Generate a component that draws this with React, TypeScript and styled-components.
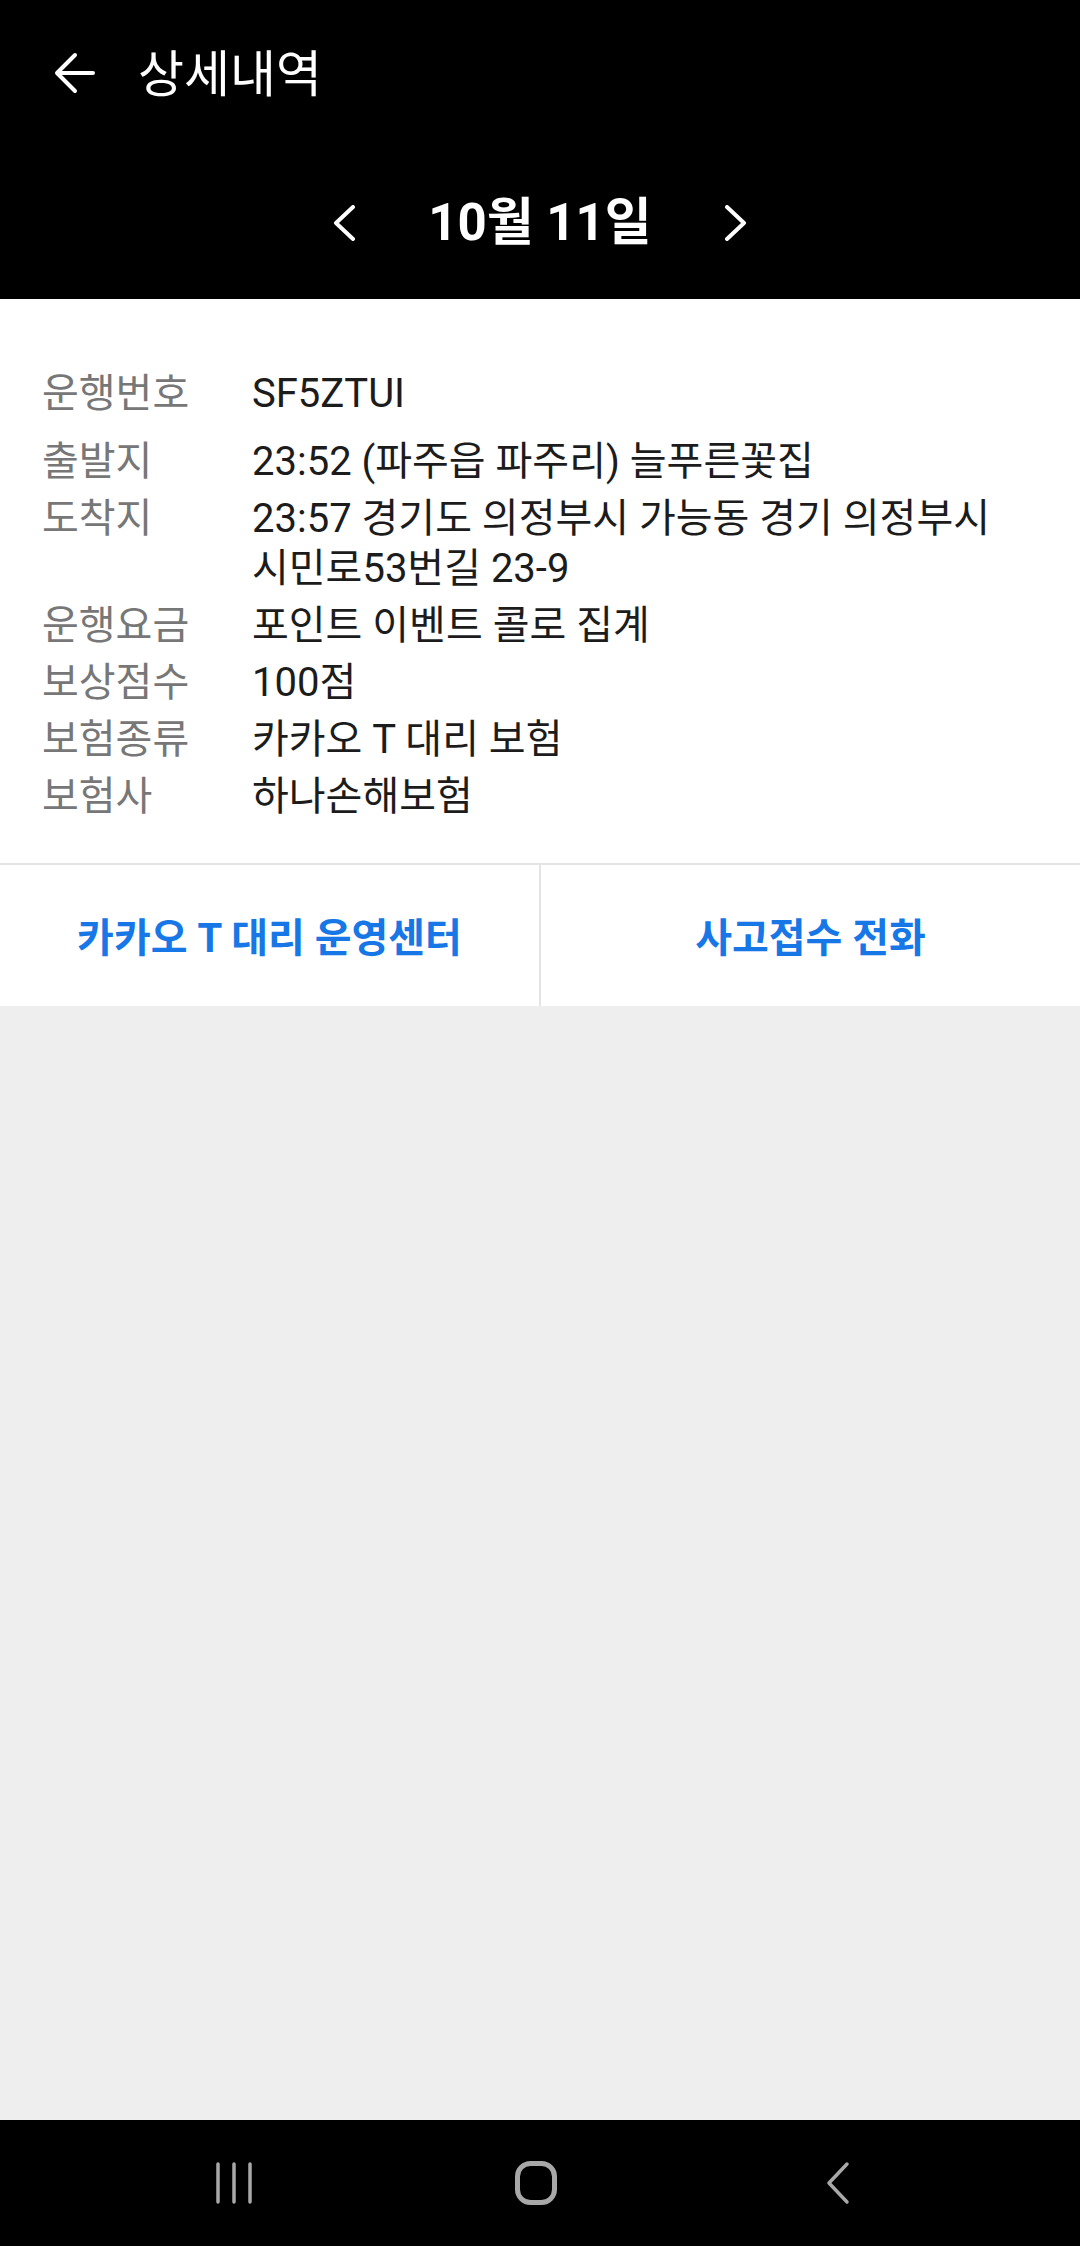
import React from 'react';
import styled, { createGlobalStyle } from 'styled-components';

const GlobalStyle = createGlobalStyle`
  html, body {
    margin: 0;
    padding: 0;
    background: #eeeeee;
  }
  body {
    font-family: Roboto, 'Noto Sans CJK KR', sans-serif;
  }
  * {
    box-sizing: border-box;
  }
`;

const rows = [
  { label: '운행번호', value: 'SF5ZTUI' },
  { label: '출발지', value: '23:52 (파주읍 파주리) 늘푸른꽃집' },
  { label: '도착지', value: '23:57 경기도 의정부시 가능동 경기 의정부시 시민로53번길 23-9' },
  { label: '운행요금', value: '포인트 이벤트 콜로 집계' },
  { label: '보상점수', value: '100점' },
  { label: '보험종류', value: '카카오 T 대리 보험' },
  { label: '보험사', value: '하나손해보험' }
];

export default function App() {
  return (
    <Page>
      <GlobalStyle />
      <Header>
        <TitleBar>
          <svg width="42" height="42" viewBox="0 0 42 42" fill="none">
            <path
              d="M39 21H4M21 3L3 21l18 18"
              stroke="#fff"
              strokeWidth="4"
              strokeLinecap="round"
              strokeLinejoin="round"
            />
          </svg>
          <Title>상세내역</Title>
        </TitleBar>
        <DateBar>
          <svg width="24" height="36" viewBox="0 0 24 36" fill="none">
            <path d="M21 2L4 18l17 16" stroke="#fff" strokeWidth="4" strokeLinecap="round" strokeLinejoin="round" />
          </svg>
          <DateText>10월 11일</DateText>
          <svg width="24" height="36" viewBox="0 0 24 36" fill="none">
            <path d="M3 2l17 16L3 34" stroke="#fff" strokeWidth="4" strokeLinecap="round" strokeLinejoin="round" />
          </svg>
        </DateBar>
      </Header>

      <InfoList>
        {rows.map((row, i) => (
          <InfoRow key={row.label} first={i === 0}>
            <Label>{row.label}</Label>
            <Value>{row.value}</Value>
          </InfoRow>
        ))}
      </InfoList>

      <ButtonRow>
        <LinkButton>카카오 T 대리 운영센터</LinkButton>
        <LinkButton>사고접수 전화</LinkButton>
      </ButtonRow>

      <Filler />

      <NavBar>
        <NavIcon>
          <svg width="40" height="44" viewBox="0 0 40 44" fill="none">
            <path d="M4 3v38M20 3v38M36 3v38" stroke="#a8a8a8" strokeWidth="3.5" strokeLinecap="round" />
          </svg>
        </NavIcon>
        <NavIcon>
          <svg width="44" height="46" viewBox="0 0 44 46" fill="none">
            <rect x="3.5" y="3.5" width="37" height="39" rx="13" stroke="#a8a8a8" strokeWidth="5" />
          </svg>
        </NavIcon>
        <NavIcon>
          <svg width="26" height="44" viewBox="0 0 26 44" fill="none">
            <path d="M22 3L4 22l18 19" stroke="#a8a8a8" strokeWidth="3.5" strokeLinecap="round" strokeLinejoin="round" />
          </svg>
        </NavIcon>
      </NavBar>
    </Page>
  );
}

const Page = styled.div`
  min-height: 100vh;
  display: flex;
  flex-direction: column;
  background: #eeeeee;
`;

const Header = styled.header`
  background: #000;
  height: 299px;
  display: flex;
  flex-direction: column;
`;

const TitleBar = styled.div`
  height: 146px;
  display: flex;
  align-items: center;
  gap: 42px;
  padding-left: 54px;
`;

const Title = styled.h1`
  margin: 0;
  color: #fff;
  font-size: 50px;
  font-weight: 400;
  line-height: 1;
  padding-top: 4px;
`;

const DateBar = styled.div`
  flex: 1;
  display: flex;
  align-items: center;
  justify-content: center;
  gap: 72px;
`;

const DateText = styled.div`
  color: #fff;
  font-size: 51px;
  font-weight: 700;
  line-height: 1;
`;

const InfoList = styled.div`
  background: #fff;
  padding: 70px 42px 41px;
  display: flex;
  flex-direction: column;
  gap: 7px;
`;

const InfoRow = styled.div<{ first?: boolean }>`
  display: flex;
  font-size: 40px;
  line-height: 50px;
  margin-bottom: ${(p) => (p.first ? '11px' : '0')};
`;

const Label = styled.div`
  flex: 0 0 210px;
  color: #777;
`;

const Value = styled.div`
  flex: 1;
  color: #1c1c1c;
  word-break: keep-all;
`;

const ButtonRow = styled.div`
  display: grid;
  grid-template-columns: 1fr 1fr;
  gap: 2px;
  background: #e4e4e4;
  border-top: 2px solid #e4e4e4;
  height: 143px;
`;

const LinkButton = styled.div`
  background: #fff;
  display: flex;
  align-items: center;
  justify-content: center;
  color: #1777e6;
  font-size: 40px;
  font-weight: 700;
  padding-bottom: 2px;
`;

const Filler = styled.div`
  flex: 1;
  background: #eeeeee;
`;

const NavBar = styled.nav`
  height: 126px;
  background: #000;
  display: flex;
  align-items: center;
  justify-content: center;
  gap: 202px;
  padding-right: 9px;
`;

const NavIcon = styled.div`
  width: 100px;
  display: flex;
  justify-content: center;
  align-items: center;
`;
